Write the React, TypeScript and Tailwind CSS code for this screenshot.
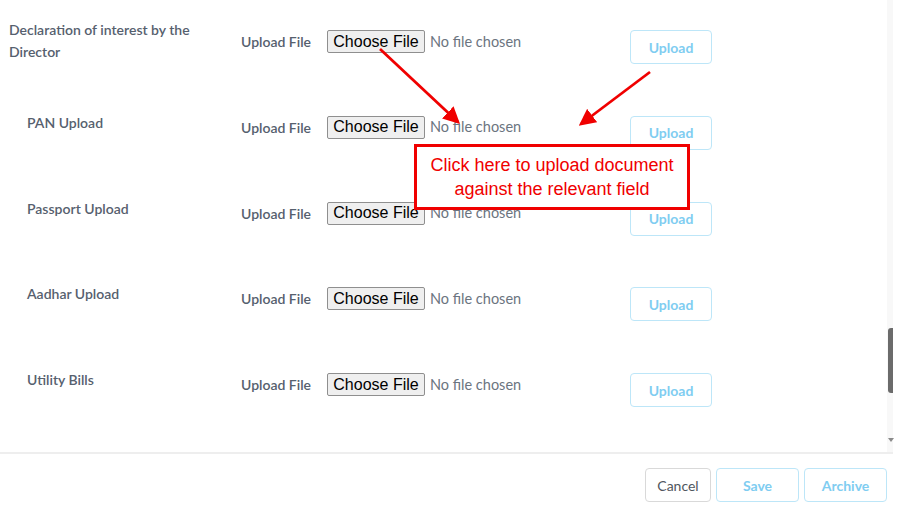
import React from "react";

const rows = [
  { label: "Declaration of interest by the Director", indent: false },
  { label: "PAN Upload", indent: true },
  { label: "Passport Upload", indent: true },
  { label: "Aadhar Upload", indent: true },
  { label: "Utility Bills", indent: true },
];

const FileRow = ({ label, indent }: { label: string; indent: boolean }) => (
  <div className="flex h-[85.75px] items-start">
    <div
      className={
        indent
          ? "w-[241px] shrink-0 pl-[27px] pt-[7px] text-[14px] leading-[22px] font-semibold text-[#56606e]"
          : "w-[241px] shrink-0 pl-[9px] pr-[40px] text-[14px] leading-[22px] font-semibold text-[#56606e]"
      }
    >
      {label}
    </div>
    <div className="mt-[11px] flex h-[23px] w-[86px] shrink-0 items-center text-[14px] font-semibold text-[#56606e]">
      Upload File
    </div>
    <div className="mt-[11px] flex h-[23px] w-[303px] shrink-0 items-center">
      <span className="flex h-[23px] w-[98px] items-center justify-center rounded-[2px] border border-[#8f8f8f] bg-[#efefef] font-['Liberation_Sans',Arial,sans-serif] text-[16px] text-black">
        Choose File
      </span>
      <span className="ml-[5px] text-[14.5px] text-[#6b7480]">No file chosen</span>
    </div>
    <button className="mt-[11px] h-[34px] w-[82px] rounded-[4px] border border-[#bde6f8] text-[14px] font-bold text-[#7fcdf1]">
      Upload
    </button>
  </div>
);

export default function App() {
  return (
    <div className="relative h-[517px] w-[903px] overflow-hidden bg-white font-['Lato',sans-serif]">
      <div className="flex h-[452px] w-[893px]">
        <div className="flex-1 pt-[19px]">
          {rows.map((r) => (
            <FileRow key={r.label} label={r.label} indent={r.indent} />
          ))}
        </div>
        <div className="relative w-[6px] bg-[#f8f8f8]">
          <div className="absolute left-[1px] top-[328px] h-[65px] w-[5px] rounded-l-[3px] bg-[#6b6b6b]" />
          <div className="absolute left-[1px] top-[438px] h-0 w-0 border-x-[3px] border-t-[4px] border-x-transparent border-t-[#8a8a8a]" />
        </div>
      </div>
      <div className="h-[2px] w-[893px] bg-[#eeeeee]" />
      <div className="flex justify-end gap-[5px] pr-[16px] pt-[14px]">
        <button className="h-[34px] w-[66px] rounded-[4px] border border-[#d9d9d9] text-[14px] text-[#50565e]">
          Cancel
        </button>
        <button className="h-[34px] w-[83px] rounded-[4px] border border-[#bde6f8] text-[14px] font-bold text-[#7fcdf1]">
          Save
        </button>
        <button className="h-[34px] w-[83px] rounded-[4px] border border-[#bde6f8] text-[14px] font-bold text-[#7fcdf1]">
          Archive
        </button>
      </div>

      <svg className="pointer-events-none absolute left-0 top-0" width="903" height="517">
        <defs>
          <marker id="ah" markerWidth="6" markerHeight="6" refX="5" refY="3" orient="auto">
            <path d="M0,0 L6,3 L0,6 Z" fill="#f00000" />
          </marker>
        </defs>
        <line x1="380" y1="49" x2="458" y2="122" stroke="#f00000" strokeWidth="2.8" markerEnd="url(#ah)" />
        <line x1="650" y1="72" x2="581" y2="124" stroke="#f00000" strokeWidth="2.8" markerEnd="url(#ah)" />
      </svg>

      <div className="absolute left-[414px] top-[144px] flex h-[66px] w-[276px] flex-col items-center justify-center border-[3px] border-[#f00000] bg-white font-['Liberation_Sans',Arial,sans-serif] text-[18px] leading-[24px] text-[#f00000]">
        <span>Click here to upload document</span>
        <span>against the relevant field</span>
      </div>
    </div>
  );
}
